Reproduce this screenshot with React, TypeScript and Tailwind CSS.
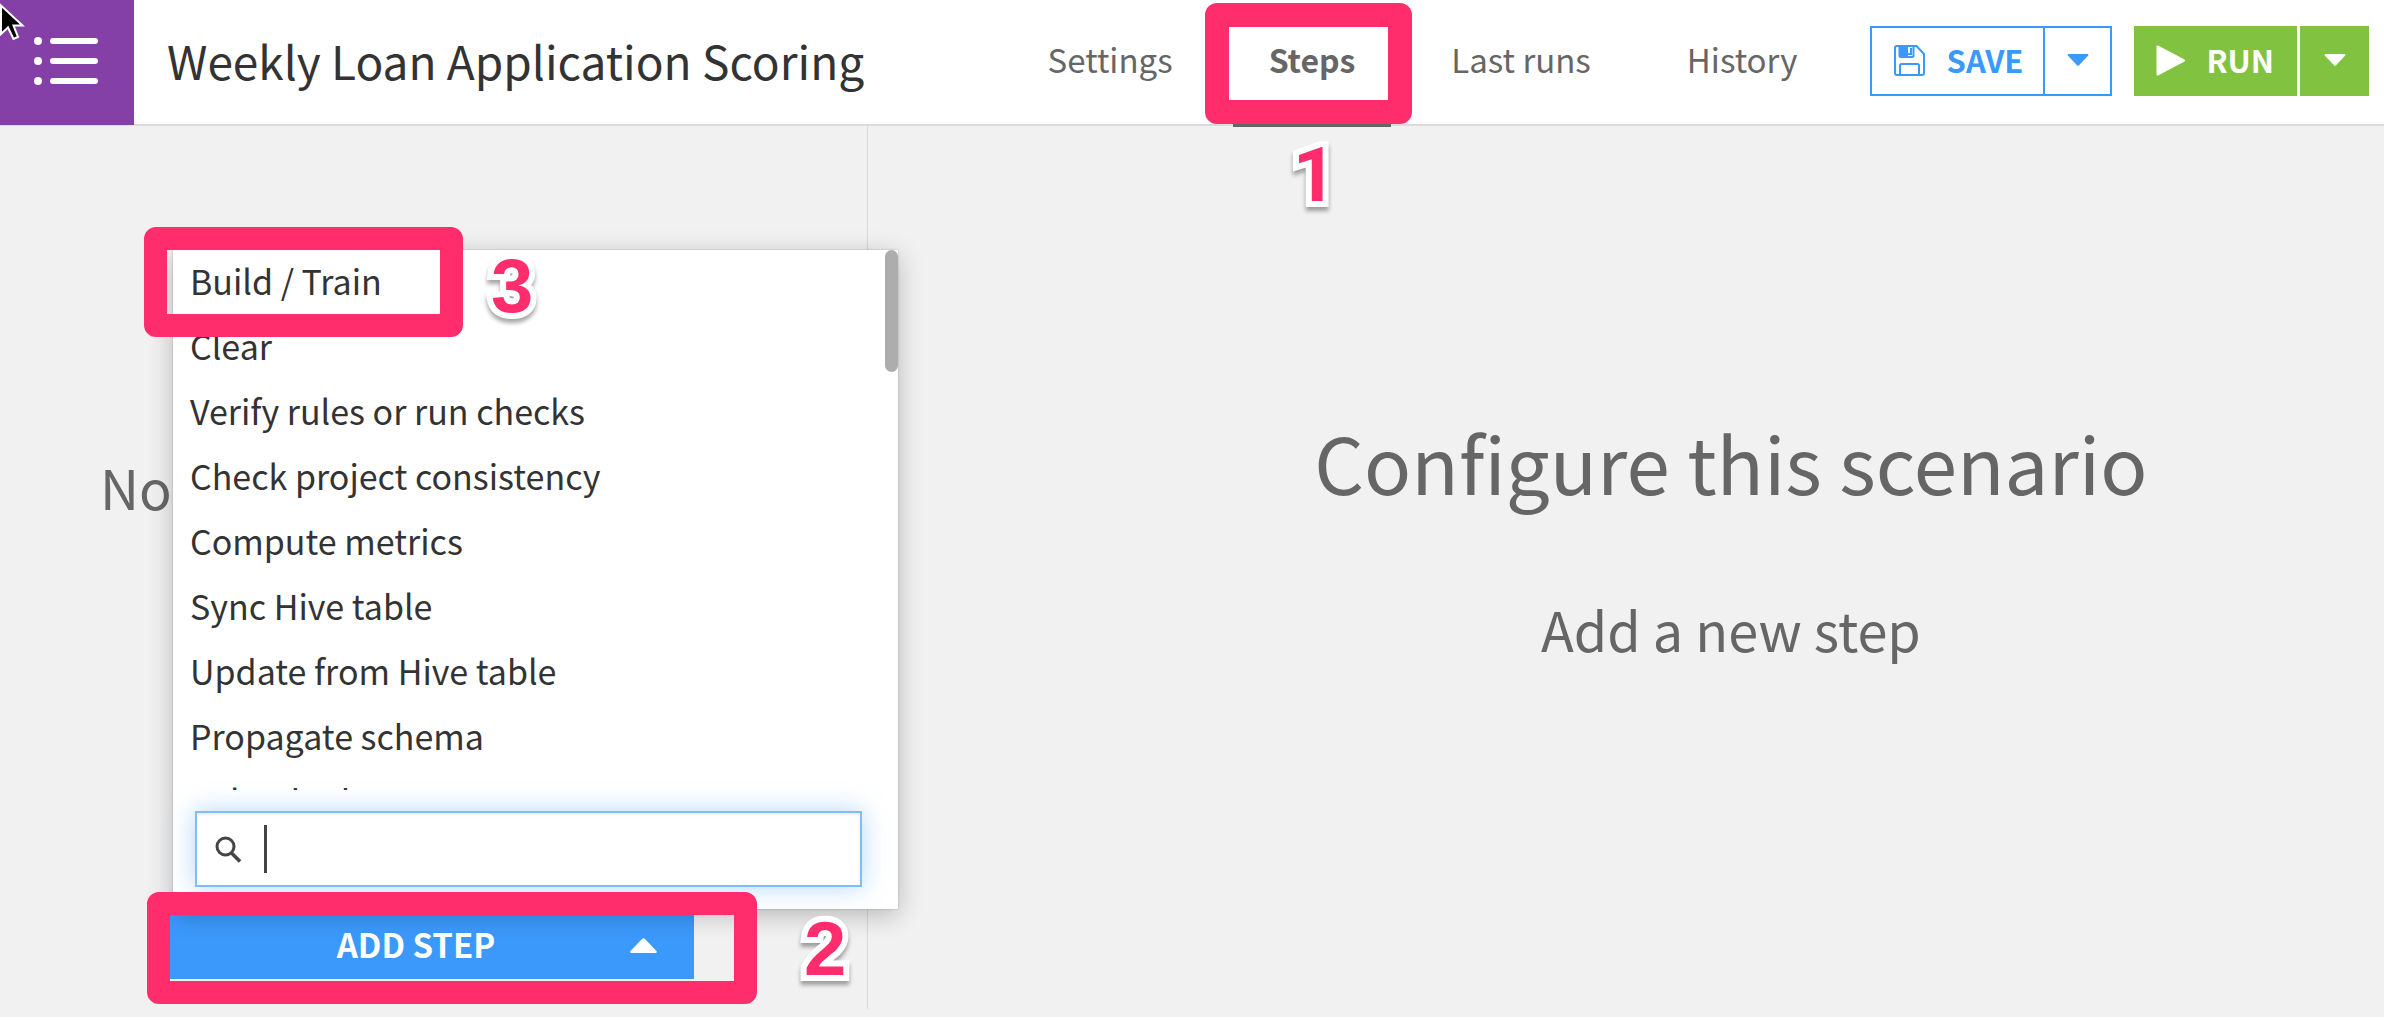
import type { ReactNode } from "react";

const steps = [
  "Build / Train",
  "Clear",
  "Verify rules or run checks",
  "Check project consistency",
  "Compute metrics",
  "Sync Hive table",
  "Update from Hive table",
  "Propagate schema",
  "Reload schema",
];

const tabs = ["Settings", "Steps", "Last runs", "History"];

function Digit({ className, children }: { className: string; children: ReactNode }) {
  return (
    <span
      className={
        "pointer-events-none absolute z-40 text-[76px] leading-[76px] font-bold text-[#ff2d6b] [-webkit-text-stroke:12px_white] [paint-order:stroke_fill] [stroke-linejoin:round] drop-shadow-[0_4px_2px_rgba(0,0,0,0.35)] " +
        className
      }
    >
      {children}
    </span>
  );
}

function Frame({ className }: { className: string }) {
  return (
    <span
      className={"pointer-events-none absolute z-30 rounded-xl border-[#ff2d6b] " + className}
    />
  );
}

function CaretDown() {
  return (
    <svg className="h-3 w-[22px]" viewBox="0 0 22 12" fill="currentColor" aria-hidden="true">
      <path d="M1.5 0h19q1.5.4.5 1.8l-9 9.4q-1 1-2 0L1 1.8Q0 .4 1.500 0Z" />
    </svg>
  );
}

function Header() {
  return (
    <header className="flex h-[126px] shrink-0 items-stretch border-b-2 border-[#dcdcdc] bg-white">
      <button aria-label="Menu" className="-mb-px flex w-[134px] shrink-0 items-center bg-[#8540a8] pb-[3px] pl-[34px]">
        <svg className="h-12 w-16" viewBox="0 0 64 48" fill="white" aria-hidden="true">
          <circle cx="4" cy="4" r="4" />
          <circle cx="4" cy="24" r="4" />
          <circle cx="4" cy="44" r="4" />
          <rect x="16" y="1" width="48" height="6" rx="3" />
          <rect x="16" y="21" width="48" height="6" rx="3" />
          <rect x="16" y="41" width="48" height="6" rx="3" />
        </svg>
      </button>
      <h1 className="flex-1 pl-[33px] text-[46px] leading-[120px] whitespace-nowrap text-[#333]">
        Weekly Loan Application Scoring
      </h1>
      <nav className="mr-9 flex gap-6">
        {tabs.map((tab) =>
          tab === "Steps" ? (
            <div key={tab} className="relative">
              <a href="#steps" aria-current="page" className="block px-9 text-[32px] leading-[118px] font-bold text-[#666]">
                {tab}
              </a>
              <Frame className="top-[3px] -right-[21px] -left-7 h-[121px] border-24" />
              <span className="absolute inset-x-0 top-[124px] z-30 h-[3px] bg-[#666]" />
              <Digit className="top-[137px] left-[60px] font-[Roboto,sans-serif]">1</Digit>
            </div>
          ) : (
            <a key={tab} href={"#" + tab} className="px-9 text-[33px] leading-[118px] whitespace-nowrap text-[#666]">
              {tab}
            </a>
          ),
        )}
      </nav>
      <div className="mt-[26px] mr-[15px] flex h-[70px] gap-[22px] text-[31px] font-bold">
        <div className="flex border-2 border-[#3b99fc] text-[#3b99fc]">
          <button className="flex items-center gap-[22px] pr-5 pb-[2px] pl-[22px]">
            <svg className="h-[31px] w-[31px]" viewBox="0 0 31 31" fill="none" stroke="currentColor" strokeWidth="2" aria-hidden="true">
              <path d="M3 1H22.500L30 9V28q0 2-2 2H3q-2 0-2-2V3q0-2 2-2Z" />
              <path d="M5.500 1V10.500q0 1.500 1.500 1.500H18q1.500 0 1.500-1.500V1" />
              <path d="M6 1H14V12H7q-1 0-1-1Z" fill="currentColor" stroke="none" />
              <path d="M13 3V9H17V3" />
              <path d="M6 30V20.500q0-1.500 1.500-1.500h16q1.500 0 1.500 1.500V30" />
            </svg>
            SAVE
          </button>
          <button aria-label="More save options" className="flex w-[67px] items-center justify-center border-l-2 border-[#3b99fc] pb-[2px]">
            <CaretDown />
          </button>
        </div>
        <div className="flex gap-[3px] text-white">
          <button className="flex items-center gap-5 bg-[#81c341] pr-[23px] pb-[2px] pl-[22px]">
            <svg className="h-[31px] w-[30px]" viewBox="0 0 30 31" fill="white" aria-hidden="true">
              <path d="M.5 1.500Q.5 0 2 .5L28.500 14.500q1.500 1 0 2L2 30.500Q.5 31 .5 29.500Z" />
            </svg>
            RUN
          </button>
          <button aria-label="More run options" className="flex w-[69px] items-center justify-center bg-[#81c341] pb-[2px]">
            <CaretDown />
          </button>
        </div>
      </div>
    </header>
  );
}

function StepMenu() {
  return (
    <div className="absolute bottom-full left-[3px] z-20 w-[725px] bg-white pb-[22px] shadow-[0_6px_24px_rgba(0,0,0,0.24),0_0_2px_rgba(0,0,0,0.2)]">
      <ul className="h-[540px] overflow-hidden text-[34px] leading-[62px] text-[#333]">
        {steps.map((step) => (
          <li key={step}>
            <button className="flex h-[65px] w-full items-start pl-[17px] whitespace-nowrap">{step}</button>
          </li>
        ))}
      </ul>
      <span className="absolute top-0 right-0 h-[122px] w-[13px] rounded-full bg-[#adadad]" />
      <label className="mt-[21px] mr-9 ml-[22px] flex h-[76px] items-center border-2 border-[#7fbdf3] bg-white pl-[18px] text-[#444] shadow-[0_0_24px_rgba(59,153,252,0.4),inset_0_2px_3px_rgba(0,0,0,0.08)]">
        <svg className="h-[27px] w-[27px]" viewBox="0 0 27 27" fill="none" stroke="currentColor" strokeWidth="3" aria-hidden="true">
          <circle cx="10.500" cy="10.500" r="8.500" />
          <path d="M16.500 17L25 25.500" strokeWidth="3.500" />
        </svg>
        <span className="ml-[22px] h-12 w-[3px] bg-[#444]" />
        <input aria-label="Search steps" type="text" className="min-w-0 flex-1 bg-transparent text-[34px] outline-none" />
      </label>
      <Frame className="-top-[23px] -left-[29px] h-[110px] w-[319px] border-23" />
      <Digit className="-top-[2px] left-[318px] font-['Liberation_Sans',sans-serif]">3</Digit>
    </div>
  );
}

export default function App() {
  return (
    <div className="relative flex min-h-screen flex-col overflow-hidden bg-white pb-[11px] font-['Noto_Sans_CJK_SC',sans-serif]">
      <Header />
      <main className="flex flex-1 bg-[#f1f1f1] text-[#666]">
        <section className="mb-2 flex w-[36.4%] shrink-0 flex-col border-r border-[#dadada] pb-[30px]">
          <p className="mt-[329px] pl-[100px] text-[54px] leading-16">No</p>
          <div className="relative mt-auto ml-[170px] w-[524px]">
            <button className="flex h-[70px] w-full items-center bg-[#3b99fc] pr-[37px] pl-8 text-[33px] font-bold text-white">
              <span className="flex-1 pt-[2px] text-center">ADD STEP</span>
              <svg className="mt-[2px] h-[15px] w-[27px]" viewBox="0 0 27 15" fill="white" aria-hidden="true">
                <path d="M12 1Q13.500-.5 15 1L26.500 13q1 1.500-1 2h-24q-2-.5-1-2Z" />
              </svg>
            </button>
            <StepMenu />
            <Frame className="-top-[17px] -left-[23px] h-28 w-[610px] border-23" />
            <Digit className="top-[2px] left-[634px] font-['Liberation_Sans',sans-serif]">2</Digit>
          </div>
        </section>
        <section className="flex flex-1 flex-col items-center gap-[86px] pt-[285px] pl-[210px]">
          <h2 className="text-[78px] leading-[100px]">Configure this scenario</h2>
          <p className="text-[54px] leading-16">Add a new step</p>
        </section>
      </main>
      <svg className="pointer-events-none absolute top-0 left-0 z-50 h-11 w-7" viewBox="0 0 28 44" aria-hidden="true">
        <path d="M1 5.500V34L8 27.500L13.500 39L18 37L13.500 25.500H22.500Z" fill="black" stroke="white" strokeWidth="2" />
      </svg>
    </div>
  );
}
